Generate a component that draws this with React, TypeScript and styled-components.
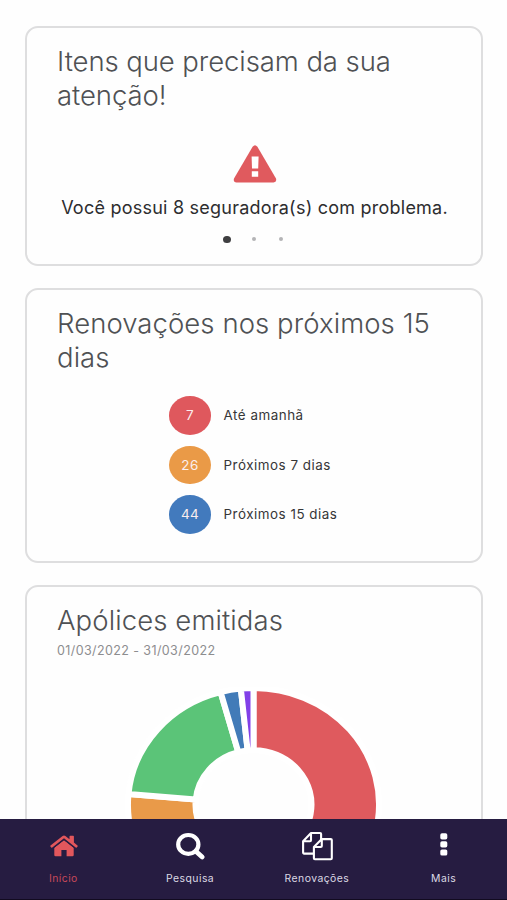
import React from 'react';
import styled, { createGlobalStyle } from 'styled-components';

const Global = createGlobalStyle`
  *, *::before, *::after { box-sizing: border-box; }
  body { margin: 0; background: #fefefe; font-family: Inter, "Liberation Sans", sans-serif; }
`;

const Page = styled.div`
  display: flex;
  flex-direction: column;
  width: 507px;
  height: 900px;
  overflow: hidden;
`;

const Feed = styled.main`
  flex: 1;
  min-height: 0;
  overflow: hidden;
  display: flex;
  flex-direction: column;
  gap: 22px;
  padding: 26px 24px 0 25px;
`;

const Card = styled.section<{ $height: number }>`
  flex: none;
  height: ${(p) => p.$height}px;
  border: 2px solid #dededf;
  border-radius: 13px;
  padding: 16px 30px 0;
  display: flex;
  flex-direction: column;
`;

const Title = styled.h2<{ $spacing: number }>`
  margin: 0;
  font-size: 27.5px;
  font-weight: 300;
  line-height: 34px;
  letter-spacing: ${(p) => p.$spacing}px;
  color: #4f5154;
  white-space: nowrap;
`;

const Line = styled.span`
  display: block;
`;

const Alert = styled.div`
  display: flex;
  flex-direction: column;
  align-items: center;
  padding: 33px 0 0 1px;
`;

const Message = styled.p`
  margin: 10px 0 0;
  font-size: 18px;
  line-height: 30px;
  letter-spacing: 0.23px;
  color: #2d2d2f;
  white-space: nowrap;
`;

const Dots = styled.div`
  display: flex;
  justify-content: center;
  gap: 19px;
  margin-top: 12px;
`;

const DotCell = styled.span`
  width: 8px;
  height: 8px;
  display: grid;
  place-items: center;
`;

const Dot = styled.i<{ $active?: boolean }>`
  width: ${(p) => (p.$active ? 7.5 : 4.5)}px;
  height: ${(p) => (p.$active ? 7 : 4.5)}px;
  border-radius: 50%;
  background: ${(p) => (p.$active ? '#3f3f41' : '#b4b4b6')};
`;

const Renewals = styled.ul`
  list-style: none;
  margin: 0;
  padding: 22px 0 0 112px;
  display: flex;
  flex-direction: column;
  gap: 11px;
`;

const Renewal = styled.li`
  display: flex;
  align-items: center;
  gap: 12.5px;
  font-size: 13.4px;
  letter-spacing: 0.52px;
  color: #363638;
  white-space: nowrap;
`;

const Count = styled.span<{ $color: string }>`
  width: 42px;
  height: 38.5px;
  border-radius: 50%;
  display: grid;
  place-items: center;
  background: ${(p) => p.$color};
  color: #fbeeee;
  font-size: 13.5px;
  letter-spacing: 0.4px;
`;

const Period = styled.p`
  margin: 4px 0 0;
  font-size: 12.5px;
  line-height: 20px;
  letter-spacing: 0.4px;
  color: #8d8d8f;
`;

const Chart = styled.svg`
  flex: none;
  display: block;
  width: 257px;
  height: 236px;
  margin: 26px 0 0 68px;
`;

const Nav = styled.nav`
  flex: none;
  height: 81px;
  display: grid;
  grid-template-columns: repeat(4, 1fr);
  background: #261c41;
  border-bottom: 1px solid #120b20;
`;

const Tab = styled.a<{ $active?: boolean }>`
  display: flex;
  flex-direction: column;
  align-items: center;
  color: ${(p) => (p.$active ? '#e2575c' : '#ffffff')};
`;

const IconBox = styled.span`
  height: 52px;
  padding: 2px 0 0 1px;
  display: grid;
  place-items: center;

  svg { display: block; overflow: visible; }
`;

const TabLabel = styled.span<{ $active?: boolean }>`
  font-size: 10.4px;
  line-height: 16px;
  letter-spacing: 0.45px;
  color: ${(p) => (p.$active ? '#c8495a' : '#dcd9e4')};
`;

const WarningIcon = () => (
  <svg width="44" height="38" viewBox="0 0 44 38">
    <path d="M19.6 1.8Q22 -1.3 24.4 1.8L43 33.5Q44 37.2 40.5 37.5H3.5Q0 37.2 1 33.5Z" fill="#e05a5e" />
    <path d="M18.6 11.5h7l-.4 12h-6.2zM18.8 26.2h6.4v5.6h-6.4z" fill="#fff" />
  </svg>
);

const HomeIcon = () => (
  <svg width="28" height="22" viewBox="0 0 28 22" fill="currentColor">
    <path d="M4.3 12.8 14 5.2l9.7 7.6v7.2q0 1.3-1.3 1.3h-5.8v-6.2h-5.2v6.2H5.6q-1.3 0-1.3-1.3z" />
    <path d="M.5 10.6 12.6.9q1.4-1 2.8 0l4.1 3.3V1.5q0-.7.7-.7h3q.7 0 .7.7v6l3.6 3.1q.5.4.1.9l-.9 1q-.5.4-1 .1L14 3.2 2.3 12.6q-.5.3-1-.1l-.9-1q-.4-.5.1-.9z" />
    <path d="M3.4 13 14 4.5 24.6 13" fill="none" stroke="#261c41" strokeWidth="0.9" />
  </svg>
);

const SearchIcon = () => (
  <svg width="29" height="27" viewBox="0 0 29 27" fill="none" stroke="currentColor">
    <ellipse cx="12.3" cy="11.4" rx="10.1" ry="9.4" strokeWidth="4.2" />
    <path d="m19.8 18.2 6.4 5.8" strokeWidth="4.8" strokeLinecap="round" />
  </svg>
);

const FilesIcon = () => (
  <svg width="31" height="29" viewBox="0 0 31 29" fill="none" stroke="currentColor" strokeWidth="2.1" strokeLinejoin="round">
    <path d="M11.8 21.6H2.1q-1 0-1-1V9.2L9 1h9.1q1 0 1 1v5.8M1.1 9.2h6.9q1 0 1-1V1" />
    <path d="M19.8 7.1h9q1 0 1 1v18.2q0 1-1 1H12.9q-1 0-1-1V15zM11.9 15h6.9q1 0 1-1V7.1" />
  </svg>
);

const MoreIcon = () => (
  <svg width="8" height="26" viewBox="0 0 8 26" fill="currentColor">
    <rect x="0.3" y="0.2" width="7" height="6.2" rx="1.7" />
    <rect x="0.3" y="8.3" width="7" height="6.2" rx="1.7" />
    <rect x="0.3" y="16.4" width="7" height="6.2" rx="1.7" />
  </svg>
);

const slices = [
  { from: 0, to: 200, color: '#df5a5e' },
  { from: 200, to: 275.2, color: '#e99a49' },
  { from: 275.2, to: 344.8, color: '#5bc478' },
  { from: 344.8, to: 354.2, color: '#427bb8' },
  { from: 354.2, to: 360, color: '#8240e8' },
];

const CX = 128.5;
const CY = 117.5;
const OUTER = [125.5, 116.5];
const INNER = [58, 54.2];

const point = (deg: number, [rx, ry]: number[]) => {
  const a = (deg * Math.PI) / 180;
  return `${(CX + rx * Math.sin(a)).toFixed(2)} ${(CY - ry * Math.cos(a)).toFixed(2)}`;
};

const slicePath = (from: number, to: number) => {
  const large = to - from > 180 ? 1 : 0;
  return `M${point(from, OUTER)}A${OUTER.join(' ')} 0 ${large} 1 ${point(to, OUTER)}L${point(to, INNER)}A${INNER.join(' ')} 0 ${large} 0 ${point(from, INNER)}Z`;
};

const renewals = [
  { count: 7, label: 'Até amanhã', color: '#df585d' },
  { count: 26, label: 'Próximos 7 dias', color: '#ea9a47' },
  { count: 44, label: 'Próximos 15 dias', color: '#427abd' },
];

const tabs = [
  { label: 'Início', icon: <HomeIcon />, active: true },
  { label: 'Pesquisa', icon: <SearchIcon /> },
  { label: 'Renovações', icon: <FilesIcon /> },
  { label: 'Mais', icon: <MoreIcon /> },
];

export default function App() {
  return (
    <Page>
      <Global />
      <Feed>
        <Card $height={240}>
          <Title $spacing={-0.08}>
            <Line>Itens que precisam da sua</Line>
            <Line>atenção!</Line>
          </Title>
          <Alert>
            <WarningIcon />
            <Message>Você possui 8 seguradora(s) com problema.</Message>
          </Alert>
          <Dots>
            <DotCell><Dot $active /></DotCell>
            <DotCell><Dot /></DotCell>
            <DotCell><Dot /></DotCell>
          </Dots>
        </Card>
        <Card $height={275}>
          <Title $spacing={0.07}>
            <Line>Renovações nos próximos 15</Line>
            <Line>dias</Line>
          </Title>
          <Renewals>
            {renewals.map((r) => (
              <Renewal key={r.label}>
                <Count $color={r.color}>{r.count}</Count>
                {r.label}
              </Renewal>
            ))}
          </Renewals>
        </Card>
        <Card $height={380}>
          <Title $spacing={0.1}>Apólices emitidas</Title>
          <Period>01/03/2022 - 31/03/2022</Period>
          <Chart viewBox="0 0 257 236">
            {slices.map((s) => (
              <path key={s.color} d={slicePath(s.from, s.to)} fill={s.color} stroke="#fff" strokeWidth="6" />
            ))}
          </Chart>
        </Card>
      </Feed>
      <Nav>
        {tabs.map((t) => (
          <Tab key={t.label} $active={t.active}>
            <IconBox>{t.icon}</IconBox>
            <TabLabel $active={t.active}>{t.label}</TabLabel>
          </Tab>
        ))}
      </Nav>
    </Page>
  );
}
